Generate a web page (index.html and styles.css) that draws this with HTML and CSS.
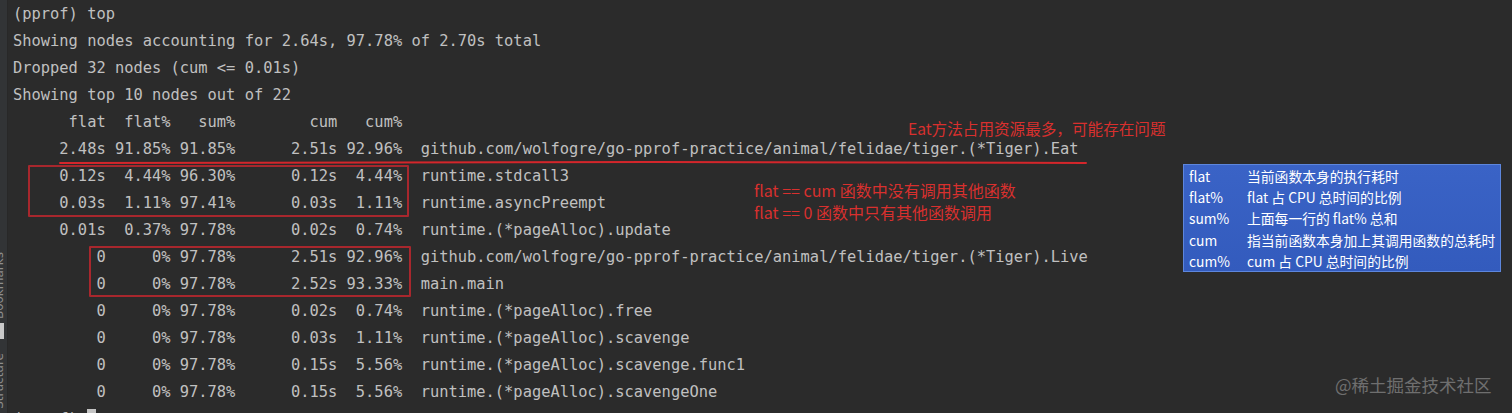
FILE: index.html
```html
<!DOCTYPE html>
<html lang="en">
<head>
<meta charset="utf-8">
<title>pprof top</title>
<link rel="stylesheet" href="styles.css">
</head>
<body>
<div class="screen">
  <aside class="toolstrip">
    <span class="tool-label tool-bookmarks">Bookmarks</span>
    <span class="tool-icon"></span>
    <span class="tool-label tool-structure">Structure</span>
  </aside>
  <main class="term">
    <div class="line">(pprof) top</div>
    <div class="line">Showing nodes accounting for 2.64s, 97.78% of 2.70s total</div>
    <div class="line">Dropped 32 nodes (cum &lt;= 0.01s)</div>
    <div class="line">Showing top 10 nodes out of 22</div>
    <div class="line">      flat  flat%   sum%        cum   cum%</div>
    <div class="line">     2.48s 91.85% 91.85%      2.51s 92.96%  github.com/wolfogre/go-pprof-practice/animal/felidae/tiger.(*Tiger).Eat</div>
    <div class="line">     0.12s  4.44% 96.30%      0.12s  4.44%  runtime.stdcall3</div>
    <div class="line">     0.03s  1.11% 97.41%      0.03s  1.11%  runtime.asyncPreempt</div>
    <div class="line">     0.01s  0.37% 97.78%      0.02s  0.74%  runtime.(*pageAlloc).update</div>
    <div class="line">         0     0% 97.78%      2.51s 92.96%  github.com/wolfogre/go-pprof-practice/animal/felidae/tiger.(*Tiger).Live</div>
    <div class="line">         0     0% 97.78%      2.52s 93.33%  main.main</div>
    <div class="line">         0     0% 97.78%      0.02s  0.74%  runtime.(*pageAlloc).free</div>
    <div class="line">         0     0% 97.78%      0.03s  1.11%  runtime.(*pageAlloc).scavenge</div>
    <div class="line">         0     0% 97.78%      0.15s  5.56%  runtime.(*pageAlloc).scavenge.func1</div>
    <div class="line">         0     0% 97.78%      0.15s  5.56%  runtime.(*pageAlloc).scavengeOne</div>
    <div class="line">(pprof) <span class="cursor"></span></div>
  </main>

  <div class="mark-box mark-box-flat"></div>
  <div class="mark-box mark-box-zero"></div>
  <svg class="mark-underline" width="1032" height="10" viewBox="0 0 1032 10">
    <path d="M2 5 C 300 3.6, 700 3.4, 1028 5" fill="none" stroke="#d4262b" stroke-width="2" stroke-linecap="round"/>
  </svg>

  <div class="note note-eat">Eat方法占用资源最多，可能存在问题</div>
  <div class="note-group">
    <div class="note-line">flat == cum 函数中没有调用其他函数</div>
    <div class="note-line">flat == 0 函数中只有其他函数调用</div>
  </div>

  <div class="legend">
    <span class="legend-key">flat</span><span class="legend-val">当前函数本身的执行耗时</span>
    <span class="legend-key">flat%</span><span class="legend-val">flat 占 CPU 总时间的比例</span>
    <span class="legend-key">sum%</span><span class="legend-val">上面每一行的 flat% 总和</span>
    <span class="legend-key">cum</span><span class="legend-val">指当前函数本身加上其调用函数的总耗时</span>
    <span class="legend-key">cum%</span><span class="legend-val">cum 占 CPU 总时间的比例</span>
  </div>

  <div class="watermark">@稀土掘金技术社区</div>
</div>
</body>
</html>
```

FILE: styles.css
```css
html, body {
  margin: 0;
  padding: 0;
  background: #2b2b2b;
  overflow: hidden;
}

.screen {
  position: relative;
  display: flex;
  width: 1512px;
  height: 413px;
  overflow: hidden;
  background: #2b2b2b;
}

.toolstrip {
  flex: 0 0 8px;
  display: flex;
  flex-direction: column;
  align-items: flex-start;
  gap: 4px;
  padding-top: 252px;
  background: #323436;
  border-right: 1px solid #282828;
  overflow: hidden;
  box-sizing: border-box;
}

.tool-label {
  writing-mode: vertical-rl;
  transform: rotate(180deg);
  margin-left: -7px;
  font-family: "DejaVu Sans", "Noto Sans", sans-serif;
  font-size: 12px;
  line-height: 12px;
  color: #8e8e8e;
}

.tool-icon {
  width: 4px;
  height: 16px;
  background: #c9c9c9;
}

.tool-structure {
  margin-top: 10px;
}

.term {
  flex: 1;
  padding: 1px 0 0 5px;
  font-family: "DejaVu Sans Mono", "Liberation Mono", monospace;
  font-size: 15.4px;
  color: #c0c0c0;
}

.line {
  height: 27px;
  line-height: 27px;
  white-space: pre;
}

.cursor {
  display: inline-block;
  width: 9px;
  height: 22px;
  vertical-align: -7px;
  background: #c4c4c4;
}

.mark-box {
  position: absolute;
  border: 2px solid #a8272d;
  border-radius: 1px;
  box-sizing: border-box;
}

.mark-box-flat {
  left: 28px;
  top: 165px;
  width: 381px;
  height: 52px;
}

.mark-box-zero {
  left: 89px;
  top: 246px;
  width: 322px;
  height: 51px;
}

.mark-underline {
  position: absolute;
  left: 58px;
  top: 158px;
}

.note {
  position: absolute;
  font-family: "Noto Sans CJK SC", "Noto Sans", sans-serif;
  color: #d8302e;
}

.note-eat {
  left: 908px;
  top: 117px;
  font-size: 15.6px;
  line-height: 22px;
}

.note-group {
  position: absolute;
  left: 754px;
  top: 179px;
  display: flex;
  flex-direction: column;
  font-family: "Noto Sans CJK SC", "Noto Sans", sans-serif;
  font-size: 16px;
  line-height: 22px;
  color: #d8302e;
}

.legend {
  position: absolute;
  left: 1183px;
  top: 164px;
  width: 318px;
  height: 108px;
  box-sizing: border-box;
  display: grid;
  grid-template-columns: 58px 1fr;
  grid-auto-rows: 21.4px;
  align-items: center;
  padding: 0 0 0 5px;
  background: linear-gradient(180deg, #3a63c6 0%, #335bbd 100%);
  border: 1px solid #5d86dc;
  font-family: "Noto Sans CJK SC", "Noto Sans", sans-serif;
  font-size: 13.8px;
  color: #ffffff;
  white-space: nowrap;
}

.legend-key,
.legend-val {
  line-height: 20px;
}

.watermark {
  position: absolute;
  left: 1335px;
  top: 373px;
  font-family: "Noto Sans CJK SC", "Noto Sans", sans-serif;
  font-size: 17.5px;
  line-height: 24px;
  color: #6f6f6f;
}
```
